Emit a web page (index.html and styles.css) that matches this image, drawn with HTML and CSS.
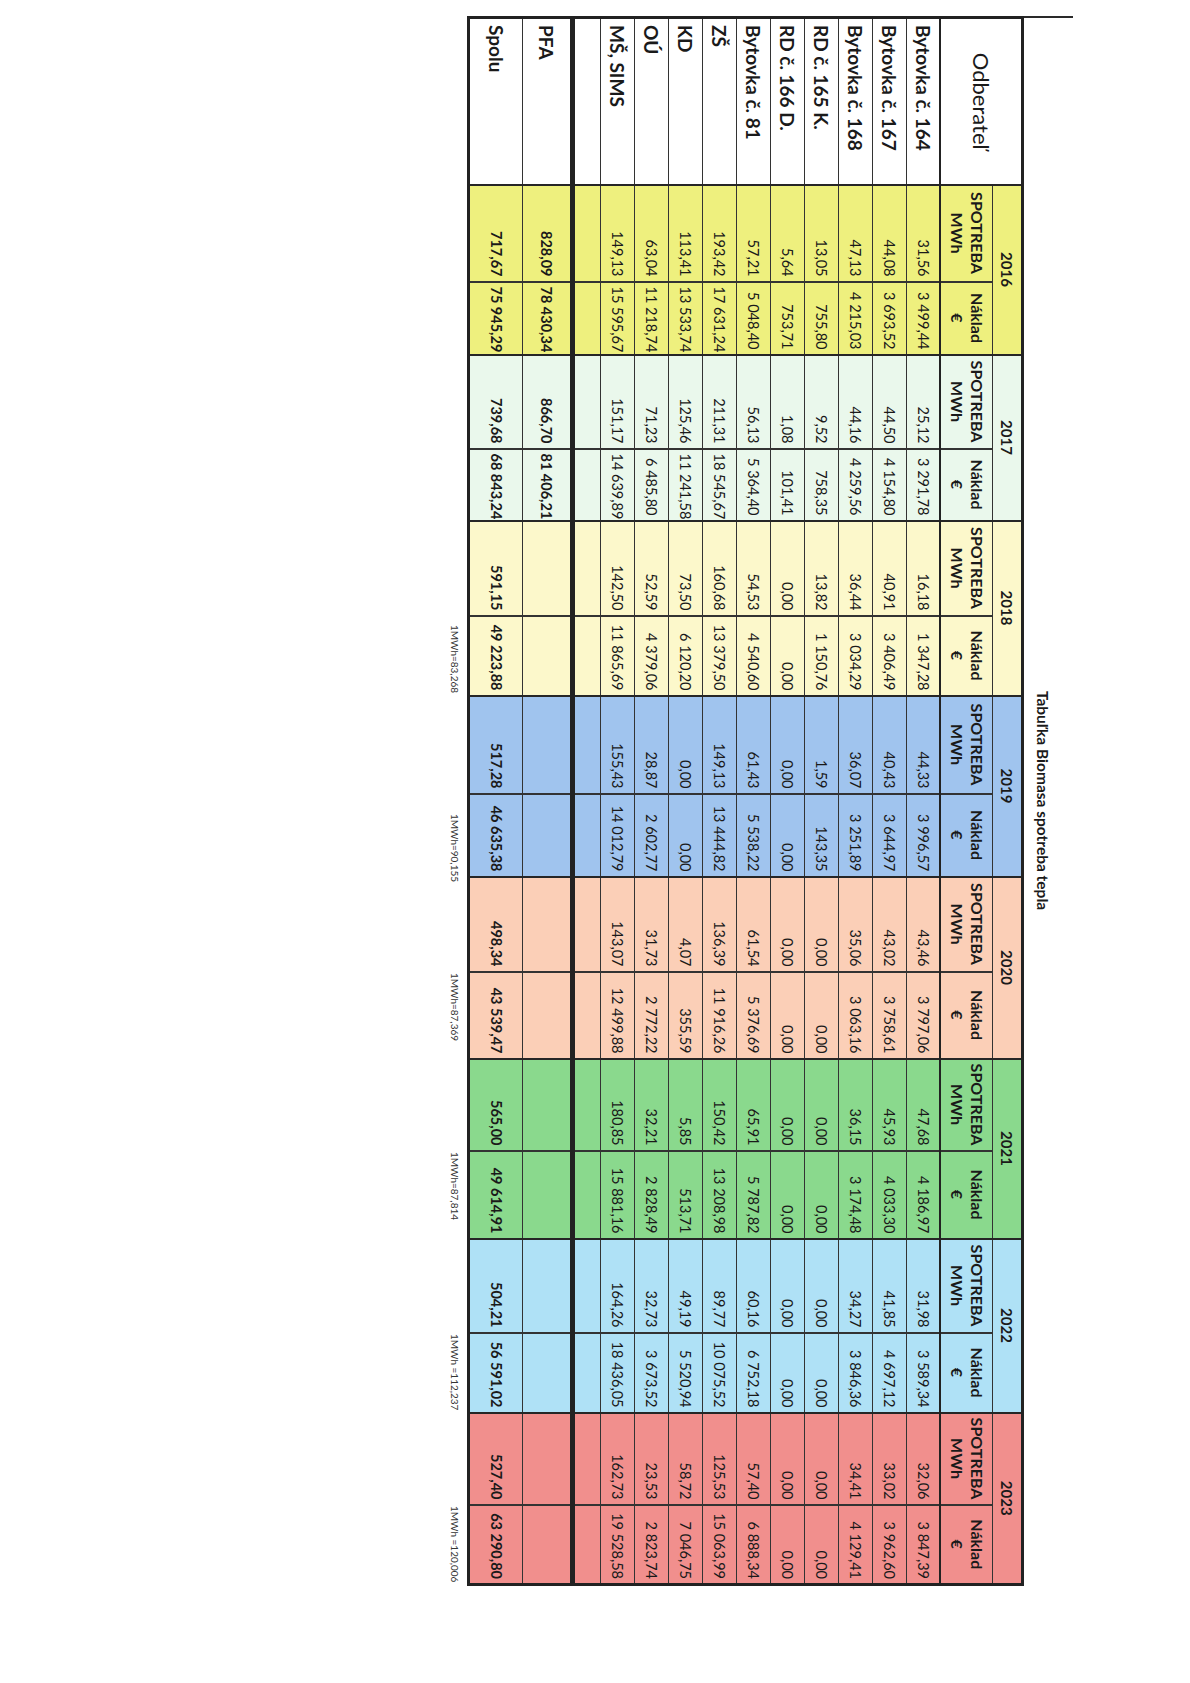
FILE: index.html
```html
<!DOCTYPE html>
<html lang="sk">
<head>
<meta charset="utf-8">
<title>Tabuľka Biomasa spotreba tepla</title>
<link rel="stylesheet" href="styles.css">
</head>
<body>
<div class="page">
  <div class="sheet">
    <div class="title-row"><h1 class="title">Tabuľka Biomasa spotreba tepla</h1></div>
    <table class="grid">
      <colgroup>
        <col class="c-name">
        <col class="s y16"><col class="n y16">
        <col class="s y17"><col class="n y17">
        <col class="s y18"><col class="n y18">
        <col class="s y19"><col class="n y19">
        <col class="s y20"><col class="n y20">
        <col class="s y21"><col class="n y21">
        <col class="s y22"><col class="n y22">
        <col class="s y23"><col class="n y23">
      </colgroup>
      <thead>
        <tr class="yr">
          <th rowspan="2" class="odb">Odberateľ</th>
          <th colspan="2">2016</th>
          <th colspan="2">2017</th>
          <th colspan="2">2018</th>
          <th colspan="2">2019</th>
          <th colspan="2">2020</th>
          <th colspan="2">2021</th>
          <th colspan="2">2022</th>
          <th colspan="2">2023</th>
        </tr>
        <tr class="sub">
          <th>SPOTREBA<br>MWh</th><th>Náklad<br>€</th>
          <th>SPOTREBA<br>MWh</th><th>Náklad<br>€</th>
          <th>SPOTREBA<br>MWh</th><th>Náklad<br>€</th>
          <th>SPOTREBA<br>MWh</th><th>Náklad<br>€</th>
          <th>SPOTREBA<br>MWh</th><th>Náklad<br>€</th>
          <th>SPOTREBA<br>MWh</th><th>Náklad<br>€</th>
          <th>SPOTREBA<br>MWh</th><th>Náklad<br>€</th>
          <th>SPOTREBA<br>MWh</th><th>Náklad<br>€</th>
        </tr>
      </thead>
      <tbody>
        <tr class="d"><td class="name">Bytovka č. 164</td><td>31,56</td><td>3&nbsp;499,44</td><td>25,12</td><td>3&nbsp;291,78</td><td>16,18</td><td>1&nbsp;347,28</td><td>44,33</td><td>3&nbsp;996,57</td><td>43,46</td><td>3&nbsp;797,06</td><td>47,68</td><td>4&nbsp;186,97</td><td>31,98</td><td>3&nbsp;589,34</td><td>32,06</td><td>3&nbsp;847,39</td></tr>
        <tr class="d"><td class="name">Bytovka č. 167</td><td>44,08</td><td>3&nbsp;693,52</td><td>44,50</td><td>4&nbsp;154,80</td><td>40,91</td><td>3&nbsp;406,49</td><td>40,43</td><td>3&nbsp;644,97</td><td>43,02</td><td>3&nbsp;758,61</td><td>45,93</td><td>4&nbsp;033,30</td><td>41,85</td><td>4&nbsp;697,12</td><td>33,02</td><td>3&nbsp;962,60</td></tr>
        <tr class="d"><td class="name">Bytovka č. 168</td><td>47,13</td><td>4&nbsp;215,03</td><td>44,16</td><td>4&nbsp;259,56</td><td>36,44</td><td>3&nbsp;034,29</td><td>36,07</td><td>3&nbsp;251,89</td><td>35,06</td><td>3&nbsp;063,16</td><td>36,15</td><td>3&nbsp;174,48</td><td>34,27</td><td>3&nbsp;846,36</td><td>34,41</td><td>4&nbsp;129,41</td></tr>
        <tr class="d"><td class="name">RD č. 165 K.</td><td>13,05</td><td>755,80</td><td>9,52</td><td>758,35</td><td>13,82</td><td>1&nbsp;150,76</td><td>1,59</td><td>143,35</td><td>0,00</td><td>0,00</td><td>0,00</td><td>0,00</td><td>0,00</td><td>0,00</td><td>0,00</td><td>0,00</td></tr>
        <tr class="d"><td class="name">RD č. 166 D.</td><td>5,64</td><td>753,71</td><td>1,08</td><td>101,41</td><td>0,00</td><td>0,00</td><td>0,00</td><td>0,00</td><td>0,00</td><td>0,00</td><td>0,00</td><td>0,00</td><td>0,00</td><td>0,00</td><td>0,00</td><td>0,00</td></tr>
        <tr class="d"><td class="name">Bytovka č. 81</td><td>57,21</td><td>5&nbsp;048,40</td><td>56,13</td><td>5&nbsp;364,40</td><td>54,53</td><td>4&nbsp;540,60</td><td>61,43</td><td>5&nbsp;538,22</td><td>61,54</td><td>5&nbsp;376,69</td><td>65,91</td><td>5&nbsp;787,82</td><td>60,16</td><td>6&nbsp;752,18</td><td>57,40</td><td>6&nbsp;888,34</td></tr>
        <tr class="d"><td class="name">ZŠ</td><td>193,42</td><td>17&nbsp;631,24</td><td>211,31</td><td>18&nbsp;545,67</td><td>160,68</td><td>13&nbsp;379,50</td><td>149,13</td><td>13&nbsp;444,82</td><td>136,39</td><td>11&nbsp;916,26</td><td>150,42</td><td>13&nbsp;208,98</td><td>89,77</td><td>10&nbsp;075,52</td><td>125,53</td><td>15&nbsp;063,99</td></tr>
        <tr class="d"><td class="name">KD</td><td>113,41</td><td>13&nbsp;533,74</td><td>125,46</td><td>11&nbsp;241,58</td><td>73,50</td><td>6&nbsp;120,20</td><td>0,00</td><td>0,00</td><td>4,07</td><td>355,59</td><td>5,85</td><td>513,71</td><td>49,19</td><td>5&nbsp;520,94</td><td>58,72</td><td>7&nbsp;046,75</td></tr>
        <tr class="d"><td class="name">OÚ</td><td>63,04</td><td>11&nbsp;218,74</td><td>71,23</td><td>6&nbsp;485,80</td><td>52,59</td><td>4&nbsp;379,06</td><td>28,87</td><td>2&nbsp;602,77</td><td>31,73</td><td>2&nbsp;772,22</td><td>32,21</td><td>2&nbsp;828,49</td><td>32,73</td><td>3&nbsp;673,52</td><td>23,53</td><td>2&nbsp;823,74</td></tr>
        <tr class="d"><td class="name">MŠ, SIMS</td><td>149,13</td><td>15&nbsp;595,67</td><td>151,17</td><td>14&nbsp;639,89</td><td>142,50</td><td>11&nbsp;865,69</td><td>155,43</td><td>14&nbsp;012,79</td><td>143,07</td><td>12&nbsp;499,88</td><td>180,85</td><td>15&nbsp;881,16</td><td>164,26</td><td>18&nbsp;436,05</td><td>162,73</td><td>19&nbsp;528,58</td></tr>
        <tr class="blank"><td class="name"></td><td></td><td></td><td></td><td></td><td></td><td></td><td></td><td></td><td></td><td></td><td></td><td></td><td></td><td></td><td></td><td></td></tr>
        <tr class="pfa"><td class="name">PFA</td><td>828,09</td><td>78&nbsp;430,34</td><td>866,70</td><td>81&nbsp;406,21</td><td></td><td></td><td></td><td></td><td></td><td></td><td></td><td></td><td></td><td></td><td></td><td></td></tr>
        <tr class="sum"><td class="name">Spolu</td><td>717,67</td><td>75&nbsp;945,29</td><td>739,68</td><td>68&nbsp;843,24</td><td>591,15</td><td>49&nbsp;223,88</td><td>517,28</td><td>46&nbsp;635,38</td><td>498,34</td><td>43&nbsp;539,47</td><td>565,00</td><td>49&nbsp;614,91</td><td>504,21</td><td>56&nbsp;591,02</td><td>527,40</td><td>63&nbsp;290,80</td></tr>
      </tbody>
    </table>
    <div class="notes">
      <span class="note k18">1MWh=83,268</span>
      <span class="note k19">1MWh=90,155</span>
      <span class="note k20">1MWh=87,369</span>
      <span class="note k21">1MWh=87,814</span>
      <span class="note k22">1MWh =112,237</span>
      <span class="note k23">1MWh =120,006</span>
    </div>
  </div>
</div>
</body>
</html>
```

FILE: styles.css
```css
html, body {
  margin: 0;
  padding: 0;
  background: #ffffff;
}

.page {
  width: 1190px;
  height: 1683px;
  overflow: hidden;
  background: #ffffff;
}

.sheet {
  width: 1567px;
  transform-origin: 0 0;
  transform: translate(1073px, 16px) rotate(90deg);
  font-family: Lato, "Liberation Sans", sans-serif;
  color: #1a1a1a;
}

.title-row {
  height: 49px;
  box-sizing: border-box;
  border-left: 2px solid #2a2a2a;
  display: flex;
  align-items: flex-end;
  justify-content: center;
  padding-bottom: 9px;
}

.title {
  margin: 0;
  font-size: 15.5px;
  line-height: 20px;
  font-weight: 700;
}

.grid {
  border-collapse: collapse;
  table-layout: fixed;
  width: 1567px;
  border: 3px solid #222;
}

.grid th,
.grid td {
  border: 1px solid #333;
  padding: 0 4px;
  white-space: nowrap;
  overflow: hidden;
  font-size: 14.5px;
  line-height: 16px;
  text-align: right;
  vertical-align: middle;
}

/* columns */
col.c-name { width: 167px; background: #ffffff; }
col.s { border-left: 2px solid #262626; }
col.n { border-left: 2px solid #333; }

col.s.y16 { width: 97px; }  col.n.y16 { width: 73px; }
col.s.y17 { width: 94px; }  col.n.y17 { width: 72px; }
col.s.y18 { width: 95px; }  col.n.y18 { width: 80px; }
col.s.y19 { width: 98px; }  col.n.y19 { width: 83px; }
col.s.y20 { width: 95px; }  col.n.y20 { width: 87px; }
col.s.y21 { width: 92px; }  col.n.y21 { width: 88px; }
col.s.y22 { width: 94px; }  col.n.y22 { width: 80px; }
col.s.y23 { width: 92px; }  col.n.y23 { width: 80px; }

col.y16 { background: #eef07e; }
col.y17 { background: #eaf8ec; }
col.y18 { background: #fcf8cb; }
col.y19 { background: #a0c4ee; }
col.y20 { background: #fbcfb7; }
col.y21 { background: #8ad98d; }
col.y22 { background: #afe1f6; }
col.y23 { background: #f18f8d; }

/* header */
.yr { height: 30px; }
.yr th {
  font-size: 15px;
  font-weight: 700;
  text-align: center;
  border-bottom: 1px solid #333;
}
.sub { height: 52px; }
.sub th {
  font-size: 16px;
  line-height: 20px;
  font-weight: 700;
  text-align: center;
  border-bottom: 2px solid #222;
}
.grid th.odb {
  font-size: 22px;
  font-weight: 400;
  text-align: center;
  border-bottom: 2px solid #222;
  background: #ffffff;
}

/* body rows */
.d { height: 34px; }
.blank { height: 28px; }
.pfa { height: 50px; }
.pfa td {
  border-top: 5px solid #222;
  font-weight: 700;
}
.sum { height: 54px; }
.sum td { font-weight: 700; }

.grid td.name {
  text-align: left;
  font-size: 19px;
  font-weight: 700;
  padding-left: 6px;
  background: #ffffff;
}

/* notes under the table */
.notes {
  display: grid;
  grid-template-columns: 167px 97px 73px 94px 72px 95px 80px 98px 83px 95px 87px 92px 88px 94px 80px 92px 80px;
  padding-top: 6px;
  font-size: 10px;
  line-height: 12px;
  color: #333;
  white-space: nowrap;
}
.note { padding-left: 3px; }
.k18 { grid-column: 7; padding-left: 11px; }
.k19 { grid-column: 9; padding-left: 22px; }
.k20 { grid-column: 11; }
.k21 { grid-column: 13; }
.k22 { grid-column: 15; }
.k23 { grid-column: 17; }
```
